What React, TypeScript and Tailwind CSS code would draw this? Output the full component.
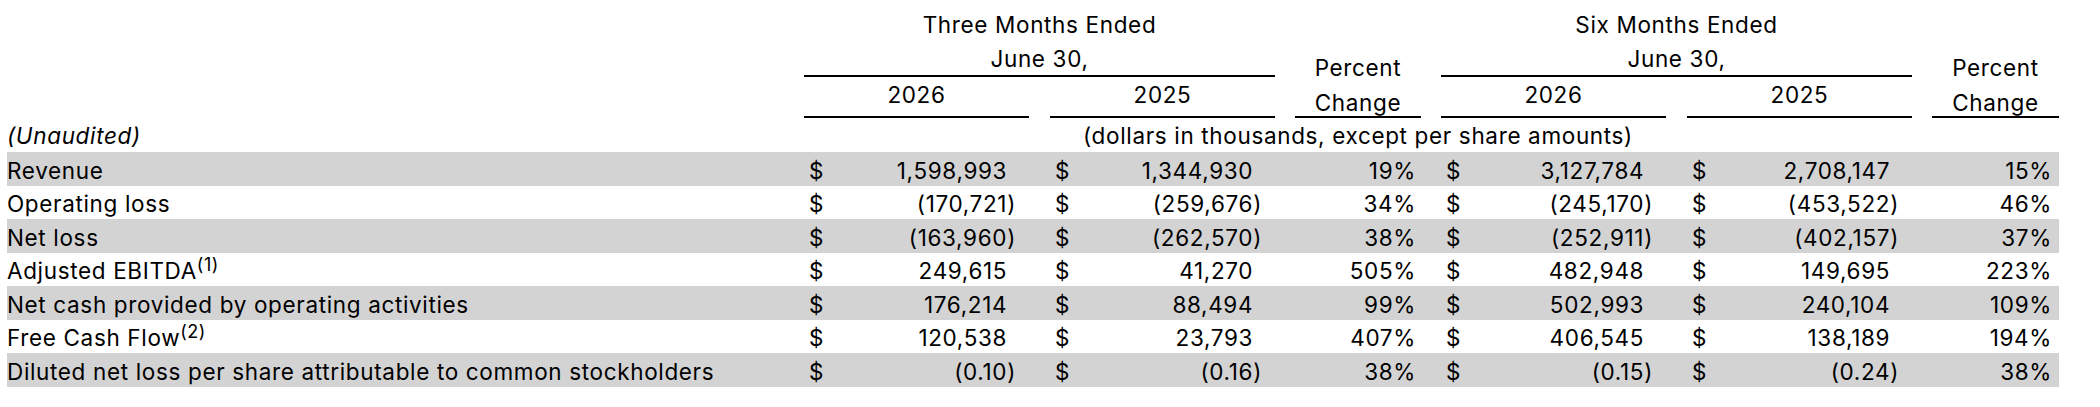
import React from "react";

type Row = {
  label: string;
  sup?: string;
  vals: [string, string, string, string, string, string];
  grey: boolean;
};

const rows: Row[] = [
  { label: "Revenue", vals: ["1,598,993", "1,344,930", "19%", "3,127,784", "2,708,147", "15%"], grey: true },
  { label: "Operating loss", vals: ["(170,721)", "(259,676)", "34%", "(245,170)", "(453,522)", "46%"], grey: false },
  { label: "Net loss", vals: ["(163,960)", "(262,570)", "38%", "(252,911)", "(402,157)", "37%"], grey: true },
  { label: "Adjusted EBITDA", sup: "(1)", vals: ["249,615", "41,270", "505%", "482,948", "149,695", "223%"], grey: false },
  { label: "Net cash provided by operating activities", vals: ["176,214", "88,494", "99%", "502,993", "240,104", "109%"], grey: true },
  { label: "Free Cash Flow", sup: "(2)", vals: ["120,538", "23,793", "407%", "406,545", "138,189", "194%"], grey: false },
  { label: "Diluted net loss per share attributable to common stockholders", vals: ["(0.10)", "(0.16)", "38%", "(0.15)", "(0.24)", "38%"], grey: true },
];

const COLS =
  "grid grid-cols-[797px_225px_21px_225px_20px_126px_20px_225px_21px_225px_20px_127px]";

function Money({ v }: { v: string }) {
  const neg = v.endsWith(")");
  return (
    <div className="flex justify-between pl-[5px] pr-[13px] pt-[1.5px] leading-[33.5px] whitespace-nowrap">
      <span>$</span>
      <span>
        {v}
        {!neg && <span className="invisible">)</span>}
      </span>
    </div>
  );
}

export default function App() {
  return (
    <div className="w-[2100px] h-[407px] bg-white pl-[7px] text-black text-[22.5px] tracking-[0.65px] font-['Inter','Liberation_Sans',sans-serif]">
      <div className={`${COLS} grid-rows-[77px_41px_34px]`}>
        <div className="col-start-2 col-span-3 row-start-1 border-b-2 border-black text-center pt-[7.5px] leading-[34.7px]">
          <div>Three Months Ended</div>
          <div>June 30,</div>
        </div>
        <div className="col-start-6 row-start-1 row-span-2 border-b-2 border-black text-center pt-[49.5px] leading-[35px]">
          <div>Percent</div>
          <div>Change</div>
        </div>
        <div className="col-start-8 col-span-3 row-start-1 border-b-2 border-black text-center pt-[7.5px] leading-[34.7px]">
          <div>Six Months Ended</div>
          <div>June 30,</div>
        </div>
        <div className="col-start-12 row-start-1 row-span-2 border-b-2 border-black text-center pt-[49.5px] leading-[35px]">
          <div>Percent</div>
          <div>Change</div>
        </div>
        <div className="col-start-2 row-start-2 border-b-2 border-black text-center pt-[1px] leading-[34px]">2026</div>
        <div className="col-start-4 row-start-2 border-b-2 border-black text-center pt-[1px] leading-[34px]">2025</div>
        <div className="col-start-8 row-start-2 border-b-2 border-black text-center pt-[1px] leading-[34px]">2026</div>
        <div className="col-start-10 row-start-2 border-b-2 border-black text-center pt-[1px] leading-[34px]">2025</div>
        <div className="col-start-1 row-start-3 italic pt-[1px] leading-[34px]">(Unaudited)</div>
        <div className="col-start-2 col-span-9 row-start-3 text-center pt-[1px] leading-[34px] whitespace-nowrap">
          (dollars in thousands, except per share amounts)
        </div>
      </div>
      <div className="w-[2052px]">
        {rows.map((r) => (
          <div key={r.label} className={`${COLS} h-[33.5px] ${r.grey ? "bg-[#d3d3d3]" : "bg-white"}`}>
            <div className="pt-[1.5px] leading-[33.5px] whitespace-nowrap">
              {r.label}
              {r.sup && <sup className="text-[18px] -top-[8px] tracking-[0.5px]">{r.sup}</sup>}
            </div>
            <Money v={r.vals[0]} />
            <div />
            <Money v={r.vals[1]} />
            <div />
            <div className="text-right pr-[5px] pt-[1.5px] leading-[33.5px]">{r.vals[2]}</div>
            <div />
            <Money v={r.vals[3]} />
            <div />
            <Money v={r.vals[4]} />
            <div />
            <div className="text-right pr-[7px] pt-[1.5px] leading-[33.5px]">{r.vals[5]}</div>
          </div>
        ))}
      </div>
    </div>
  );
}
